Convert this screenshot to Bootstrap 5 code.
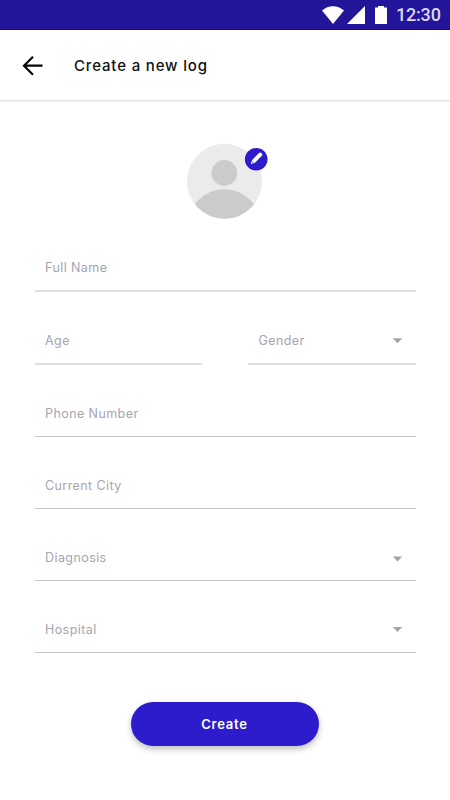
<!DOCTYPE html>
<html lang="en">
<head>
<meta charset="utf-8">
<meta name="viewport" content="width=device-width, initial-scale=1">
<title>Create a new log</title>
<link href="https://cdn.jsdelivr.net/npm/bootstrap@5.3.0/dist/css/bootstrap.min.css" rel="stylesheet">
<style>
body { font-family: Inter, "Open Sans", sans-serif; background: #fff; height: 800px; overflow: hidden; }
.status-bar { height: 30px; background: #221599; color: #dcd9f0; font: 500 18px/30px Roboto, sans-serif; padding-right: 9px; border-bottom: 1px solid #1a0c8c; }
.status-time { width: 45px; letter-spacing: -.2px; white-space: nowrap; }
.app-bar { height: 70px; padding: 2px 22px 0; box-shadow: 0 1px 2px rgba(0,0,0,.16); }
.app-title { font-size: 15px; font-weight: 500; letter-spacing: .84px; color: #111; margin-left: 31px; line-height: 20px; }
.avatar { width: 76px; height: 76px; margin: 43px 0 0 186px; }
.avatar-edit { left: 58px; top: 4px; width: 24px; height: 24px; }
.log-form { padding: 0 34.5px; margin-top: 27px; }
.field { height: 72px; border-bottom: 1px solid #c5c5c9; padding: 0 13px 10px 10.5px; font-size: 12.5px; line-height: 24px; letter-spacing: .42px; color: #a5a5af; }
.field-first { height: 46px; }
.field-pair { height: 73px; gap: 46px; }
.field-pair .field { height: 73px; }
.soft-line { border-bottom: 2px solid #dfdfe2; padding-bottom: 10px; }
.caret { width: 11px; height: 24px; }
.btn-create { width: 188px; height: 44px; margin-top: 49px; margin-right: 1px; background: #2d1ccc; color: #fff; font-size: 13px; font-weight: 600; letter-spacing: .8px; line-height: 20px; box-shadow: 0 3px 6px rgba(0,0,0,.26); }
.btn-create:hover { background: #2416aa; color: #fff; }
</style>
</head>
<body>
<div class="status-bar d-flex align-items-center justify-content-end">
  <svg width="74" height="29" viewBox="0 0 74 29" fill="#fff" aria-hidden="true">
    <path d="M0 10.5C6.500 4.800 15.500 4.800 22 10.500L11 24Z"/>
    <path d="M25 24 43 6V24Z"/>
    <path d="M53 7.500h3V6h6v1.500h3V24H53Z"/>
  </svg>
  <span class="status-time">12:30</span>
</div>
<header class="app-bar d-flex align-items-center">
  <svg width="21" height="20" viewBox="0 0 21 20" fill="none" stroke="#050505" stroke-width="2.2" aria-hidden="true"><path d="M20.500 9.700H2M11 .8 2 9.700l9 9"/></svg>
  <h1 class="app-title mb-0">Create a new log</h1>
</header>
<main>
  <div class="avatar position-relative">
    <svg class="d-block" width="76" height="76" viewBox="0 0 76 76" aria-hidden="true">
      <defs><clipPath id="face"><circle cx="38.500" cy="38.300" r="37.500"/></clipPath></defs>
      <g clip-path="url(#face)">
        <rect width="76" height="76" fill="#ebebeb"/>
        <circle cx="38.300" cy="30" r="12.900" fill="#cbcbcb"/>
        <circle cx="38.300" cy="83" r="36.700" fill="#cbcbcb"/>
      </g>
    </svg>
    <svg class="avatar-edit position-absolute" viewBox="0 0 24 24" role="img" aria-label="Edit photo">
      <circle cx="12.200" cy="12.300" r="11.300" fill="#2d1ccc"/>
      <g transform="translate(12.400 11.500) rotate(45)" fill="#fff">
        <path d="M-2-4.600v-.8a2 2 0 0 1 4 0V4L.5 7.300h-1L-2 4Z"/>
        <path d="M-.9 4.500H.9L.3 6h-.6Z" fill="#7d72dd"/>
      </g>
    </svg>
  </div>
  <form class="log-form">
    <div class="field field-first soft-line d-flex align-items-end">Full Name</div>
    <div class="field-pair d-flex">
      <div class="field soft-line flex-fill w-50 d-flex align-items-end">Age</div>
      <div class="field soft-line flex-fill w-50 d-flex align-items-end justify-content-between">Gender
        <svg class="caret" viewBox="0 0 11 24" fill="#a5a5a5" aria-hidden="true"><path d="M.8 9.200h9.400L5.500 14.200Z"/></svg>
      </div>
    </div>
    <div class="field d-flex align-items-end">Phone Number</div>
    <div class="field d-flex align-items-end">Current City</div>
    <div class="field d-flex align-items-end justify-content-between">Diagnosis
      <svg class="caret" viewBox="0 0 11 24" fill="#a5a5a5" aria-hidden="true"><path d="M.8 10.500h9.400L5.500 15.500Z"/></svg>
    </div>
    <div class="field d-flex align-items-end justify-content-between">Hospital
      <svg class="caret" viewBox="0 0 11 24" fill="#a5a5a5" aria-hidden="true"><path d="M.8 9h9.400L5.500 14Z"/></svg>
    </div>
    <div class="text-center"><button type="button" class="btn btn-create rounded-pill border-0 p-0">Create</button></div>
  </form>
</main>
<script src="https://cdn.jsdelivr.net/npm/bootstrap@5.3.0/dist/js/bootstrap.bundle.min.js"></script>
</body>
</html>
